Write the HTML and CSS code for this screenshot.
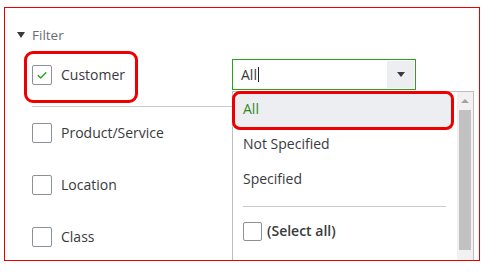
FILE: index.html
```html
<!DOCTYPE html>
<html>
<head>
<meta charset="utf-8">
<link rel="stylesheet" href="styles.css">
</head>
<body>
<div class="frame">
  <div class="filter-head"><span class="caret"></span><span>Filter</span></div>
  <div class="rows">
    <div class="row row-customer">
      <div class="field field-sep">
        <span class="annot"></span>
        <span class="cb"><svg width="20" height="20" viewBox="0 0 20 20"><path d="M6.2 10.6 L8.7 13 L13.8 7.8" fill="none" stroke="#2ca01c" stroke-width="1.4" stroke-linecap="round" stroke-linejoin="round"/></svg></span>
        <span class="lbl">Customer</span>
      </div>
      <div class="combo">
        <div class="combo-input">
          <span class="val">All</span><span class="cursor"></span>
          <span class="combo-btn"><span class="tri"></span></span>
        </div>
        <div class="menu">
          <div class="menu-items">
            <div class="item item-active">All</div>
            <div class="item">Not Specified</div>
            <div class="item">Specified</div>
            <div class="menu-sep"></div>
            <div class="select-all"><span class="cb cb-small"></span><span>(Select all)</span></div>
          </div>
          <div class="scrollbar">
            <div class="sb-up"><span class="sb-tri"></span></div>
            <div class="sb-thumb"></div>
          </div>
        </div>
      </div>
    </div>
    <div class="row"><div class="field"><span class="cb"></span><span class="lbl">Product/Service</span></div></div>
    <div class="row"><div class="field"><span class="cb"></span><span class="lbl">Location</span></div></div>
    <div class="row"><div class="field"><span class="cb"></span><span class="lbl">Class</span></div></div>
  </div>
</div>
</body>
</html>
```

FILE: styles.css
```css
* { box-sizing: border-box; }
html, body { margin: 0; padding: 0; background: #fff; }
body { font-family: "Open Sans", "Liberation Sans", sans-serif; color: #393a3d; }

.frame {
  margin: 7px 0 0 4px;
  width: 476px;
  height: 254px;
  border: 1px solid #ee0000;
  position: relative;
  overflow: hidden;
}

.filter-head {
  display: flex;
  align-items: center;
  gap: 7px;
  padding: 18px 0 0 12px;
  height: 36px;
  font-size: 13.5px;
  line-height: 18px;
  color: #6b6c72;
}
.caret {
  width: 0; height: 0;
  border-left: 4.5px solid transparent;
  border-right: 4.5px solid transparent;
  border-top: 6px solid #393a3d;
}

.rows { padding-left: 27px; }

.row {
  display: grid;
  grid-template-columns: 200px 1fr;
  height: 52px;
}
.row-customer { height: 63px; }

.field {
  display: flex;
  align-items: center;
  gap: 9px;
  font-size: 14px;
  line-height: 20px;
  position: relative;
}
.field-sep { border-bottom: 1px solid #c9cacc; }

.lbl { color: #393a3d; font-weight: 500; }

.cb {
  width: 20px; height: 20px;
  border: 1px solid #8d9096;
  border-radius: 2px;
  background: #fff;
  flex: none;
  display: block;
}
.cb svg { display: block; margin: -1px; }

.annot {
  position: absolute;
  left: -8px;
  top: 7px;
  width: 114px;
  height: 52px;
  border: 3px solid #ee0000;
  border-radius: 9px;
}

.combo {
  position: relative;
  align-self: start;
  margin-top: 15px;
  width: 184px;
}
.combo-input {
  height: 31px;
  border: 1px solid #2ca01c;
  display: flex;
  align-items: center;
  padding: 1px 1px 1px 8px;
  font-size: 14px;
  line-height: 20px;
  color: #393a3d;
}
.cursor {
  width: 1px;
  height: 15px;
  background: #222;
  margin-left: 1px;
}
.combo-btn {
  margin-left: auto;
  width: 27px;
  height: 27px;
  background: #eceef1;
  display: flex;
  align-items: center;
  justify-content: center;
}
.tri {
  width: 0; height: 0;
  border-left: 4.5px solid transparent;
  border-right: 4.5px solid transparent;
  border-top: 5px solid #393a3d;
}

.menu {
  position: absolute;
  left: 0;
  top: 32px;
  width: 242px;
  height: 200px;
  background: #fff;
  border: 1px solid #babec5;
  border-bottom: none;
  display: flex;
}
.menu-items { width: 222px; }
.item {
  height: 35px;
  padding: 4px 0 0 10px;
  font-size: 14px;
  line-height: 20px;
  color: #393a3d;
}
.item-active {
  height: 39px;
  margin: -1px 0 0 -1px;
  width: 222px;
  padding: 5px 0 0 8px;
  border: 3px solid #ee0000;
  border-radius: 8px;
  background: #eceef1;
  color: #2f8a1f;
}
.menu-sep {
  height: 1px;
  background: #c9cacc;
  margin: 6px 9px 0 10px;
}
.select-all {
  display: flex;
  align-items: center;
  gap: 5px;
  margin: 14px 0 0 10px;
  font-size: 14px;
  line-height: 20px;
  font-weight: 600;
  color: #393a3d;
}
.cb-small { width: 19px; height: 19px; }

.scrollbar {
  flex: 1;
  background: #f1f1f1;
  border-left: 2px solid #fff;
  padding: 0 2px;
}
.sb-up {
  height: 18px;
  display: flex;
  align-items: center;
  justify-content: center;
}
.sb-tri {
  width: 0; height: 0;
  border-left: 4px solid transparent;
  border-right: 4px solid transparent;
  border-bottom: 4px solid #a3a3a3;
}
.sb-thumb {
  height: 140px;
  background: #c1c1c1;
}
```
